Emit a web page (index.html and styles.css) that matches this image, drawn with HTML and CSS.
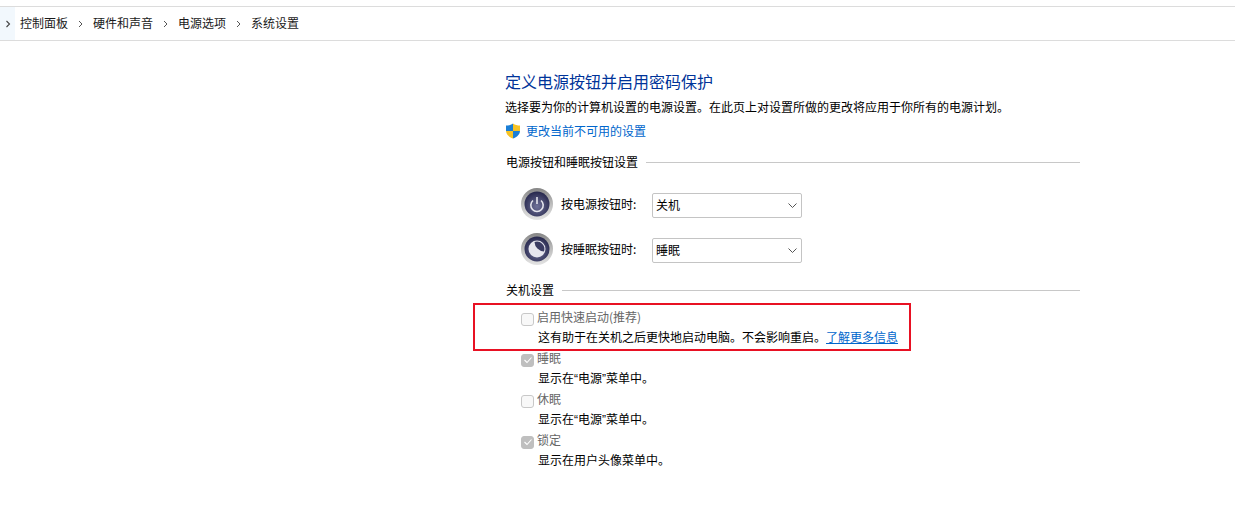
FILE: index.html
```html
<!DOCTYPE html>
<html lang="zh-CN">
<head>
<meta charset="utf-8">
<title>系统设置</title>
<link rel="stylesheet" href="styles.css">
</head>
<body>
<nav class="crumbs">
  <span class="back"><svg class="chev" width="6" height="8" viewBox="0 0 6 8"><path d="M1.5 1l3 3-3 3" fill="none" stroke="#444" stroke-width="1.1"/></svg></span>
  <span class="crumb">控制面板</span>
  <svg class="chev" width="7" height="8" viewBox="0 0 7 8"><path d="M2 1l3 3-3 3" fill="none" stroke="#555" stroke-width="1"/></svg>
  <span class="crumb">硬件和声音</span>
  <svg class="chev" width="7" height="8" viewBox="0 0 7 8"><path d="M2 1l3 3-3 3" fill="none" stroke="#555" stroke-width="1"/></svg>
  <span class="crumb">电源选项</span>
  <svg class="chev" width="7" height="8" viewBox="0 0 7 8"><path d="M2 1l3 3-3 3" fill="none" stroke="#555" stroke-width="1"/></svg>
  <span class="crumb">系统设置</span>
</nav>
<main class="panel">
  <h1 class="title">定义电源按钮并启用密码保护</h1>
  <p class="desc">选择要为你的计算机设置的电源设置。在此页上对设置所做的更改将应用于你所有的电源计划。</p>
  <div class="change">
    <svg width="16" height="16" viewBox="0 0 16 16">
      <path d="M8 .5C6 2 3.500 2.500 1 2.600V8h7z" fill="#1b7fd6"/>
      <path d="M8 .5C10 2 12.500 2.500 15 2.600V8H8z" fill="#f7c325"/>
      <path d="M1 8c.2 3.500 3 6 7 7.500V8z" fill="#f7c325"/>
      <path d="M15 8c-.2 3.500-3 6-7 7.500V8z" fill="#1b7fd6"/>
    </svg>
    <a class="link plain">更改当前不可用的设置</a>
  </div>
  <div class="section first"><span>电源按钮和睡眠按钮设置</span><i></i></div>
  <div class="btn-row">
    <svg class="round" width="34" height="34" viewBox="0 0 34 34">
      <defs>
        <linearGradient id="ring" x1="0" y1="0" x2="0" y2="1"><stop offset="0" stop-color="#858585"/><stop offset=".5" stop-color="#bdbdbd"/><stop offset="1" stop-color="#e4e4e4"/></linearGradient>
        <radialGradient id="disc" cx=".5" cy=".6" r=".6"><stop offset="0" stop-color="#70729a"/><stop offset="1" stop-color="#26274c"/></radialGradient>
      </defs>
      <circle cx="17" cy="17" r="16" fill="url(#ring)"/>
      <circle cx="17" cy="17" r="12.500" fill="url(#disc)"/>
      <path d="M13 13.500a6.200 6.200 0 1 0 8 0" fill="none" stroke="#e4e4ec" stroke-width="1.600"/>
      <path d="M17 10v7" fill="none" stroke="#e4e4ec" stroke-width="1.600"/>
    </svg>
    <span class="label">按电源按钮时:</span>
    <div class="select"><span class="val">关机</span><svg width="9" height="5" viewBox="0 0 9 5"><path d="M.5.5l4 4 4-4" fill="none" stroke="#555"/></svg></div>
  </div>
  <div class="btn-row">
    <svg class="round" width="34" height="34" viewBox="0 0 34 34">
      <circle cx="17" cy="17" r="16" fill="url(#ring)"/>
      <circle cx="17" cy="17" r="12.500" fill="url(#disc)"/>
      <circle cx="17" cy="17" r="8.500" fill="#e6e6ee"/>
      <path d="M14.500 10a7.500 7.500 0 0 1 9.500 9.500a10 10 0 0 1-9.500-9.500z" fill="#3a3b62"/>
    </svg>
    <span class="label">按睡眠按钮时:</span>
    <div class="select"><span class="val">睡眠</span><svg width="9" height="5" viewBox="0 0 9 5"><path d="M.5.5l4 4 4-4" fill="none" stroke="#555"/></svg></div>
  </div>
  <div class="section second"><span>关机设置</span><i></i></div>
  <div class="opts">
    <div class="opt">
      <div class="opt-head"><span class="box"></span><span class="opt-name">启用快速启动(推荐)</span></div>
      <p class="opt-note">这有助于在关机之后更快地启动电脑。不会影响重启。<a class="link">了解更多信息</a></p>
    </div>
    <div class="opt">
      <div class="opt-head"><span class="box on"><svg width="10" height="8" viewBox="0 0 10 8"><path d="M1.500 4l2.500 2.500 4.500-5" fill="none" stroke="#fff" stroke-width="1.100"/></svg></span><span class="opt-name">睡眠</span></div>
      <p class="opt-note">显示在<span class="q">“</span>电源<span class="q">”</span>菜单中。</p>
    </div>
    <div class="opt">
      <div class="opt-head"><span class="box"></span><span class="opt-name">休眠</span></div>
      <p class="opt-note">显示在<span class="q">“</span>电源<span class="q">”</span>菜单中。</p>
    </div>
    <div class="opt">
      <div class="opt-head"><span class="box on"><svg width="10" height="8" viewBox="0 0 10 8"><path d="M1.500 4l2.500 2.500 4.500-5" fill="none" stroke="#fff" stroke-width="1.100"/></svg></span><span class="opt-name">锁定</span></div>
      <p class="opt-note">显示在用户头像菜单中。</p>
    </div>
  </div>
  <div class="highlight"></div>
</main>
</body>
</html>
```
FILE: styles.css
```css
* { box-sizing: border-box; }
html, body { margin: 0; padding: 0; background: #fff; }
body {
  font-family: "Noto Sans CJK SC", "Noto Sans", sans-serif;
  font-size: 12px;
  color: #000;
  height: 512px;
  overflow: hidden;
}
.crumbs {
  margin-top: 6px;
  height: 35px;
  border-top: 1px solid #dcdcdc;
  border-bottom: 1px solid #dcdcdc;
  display: flex;
  align-items: center;
  gap: 9px;
  font-size: 12px;
  color: #1a1a1a;
}
.crumb { padding-bottom: 3px; }
.back {
  width: 15px;
  height: 100%;
  background: #f2f8fd;
  display: flex;
  align-items: center;
  justify-content: center;
  margin-right: -4px;
}
.chev { flex: none; }
.panel {
  position: relative;
  margin-left: 505px;
  width: 575px;
  padding-top: 28px;
}
.title {
  margin: 0;
  font-size: 16px;
  font-weight: 400;
  line-height: 24px;
  height: 24px;
  color: #003399;
}
.desc { margin: 5px 0 0; line-height: 18px; height: 18px; white-space: nowrap; }
.change { margin-top: 5px; height: 20px; display: flex; align-items: center; gap: 5px; }
.change .link { padding-bottom: 2px; }
.link { color: #0066cc; text-decoration: underline; }
.link.plain { text-decoration: none; }
.section { display: flex; align-items: center; gap: 8px; height: 20px; padding-left: 1px; }
.section span { padding-bottom: 2px; }
.section i { flex: 1; height: 1px; background: #c8c8c8; }
.section.first { margin-top: 11px; }
.section.second { margin-top: 14px; }
.btn-row { display: flex; align-items: center; height: 34px; margin-top: 11px; padding-left: 15px; }
.section.first + .btn-row { margin-top: 15px; }
.round { flex: none; margin-right: 7px; }
.label { width: 91px; padding-bottom: 2px; }
.select {
  width: 150px;
  height: 25px;
  margin-top: 3px;
  border: 1px solid #c4c4c4;
  border-radius: 2px;
  display: flex;
  align-items: center;
  justify-content: space-between;
  padding: 0 4px 0 3px;
  background: #fff;
}
.val { padding-bottom: 2px; }
.opts { display: flex; flex-direction: column; gap: 3px; margin-top: 8px; padding-left: 16px; }
.opt { height: 38px; }
.opt-head { display: flex; align-items: center; height: 20px; gap: 3px; color: #666; }
.opt-name { padding-bottom: 4px; }
.box {
  width: 13px;
  height: 13px;
  border: 1px solid #c8c8c8;
  border-radius: 3px;
  background: #f8f8f8;
  display: flex;
  align-items: center;
  justify-content: center;
  margin-top: 2px;
}
.box.on { background: #bfbfbf; border-color: #bfbfbf; }
.opt-note { margin: 0; padding-left: 17px; line-height: 18px; height: 18px; white-space: nowrap; }
.q { font-family: "Liberation Sans", sans-serif; }
.highlight {
  position: absolute;
  left: -32px;
  top: 262px;
  width: 438px;
  height: 48px;
  border: 2px solid #e81123;
}
```
